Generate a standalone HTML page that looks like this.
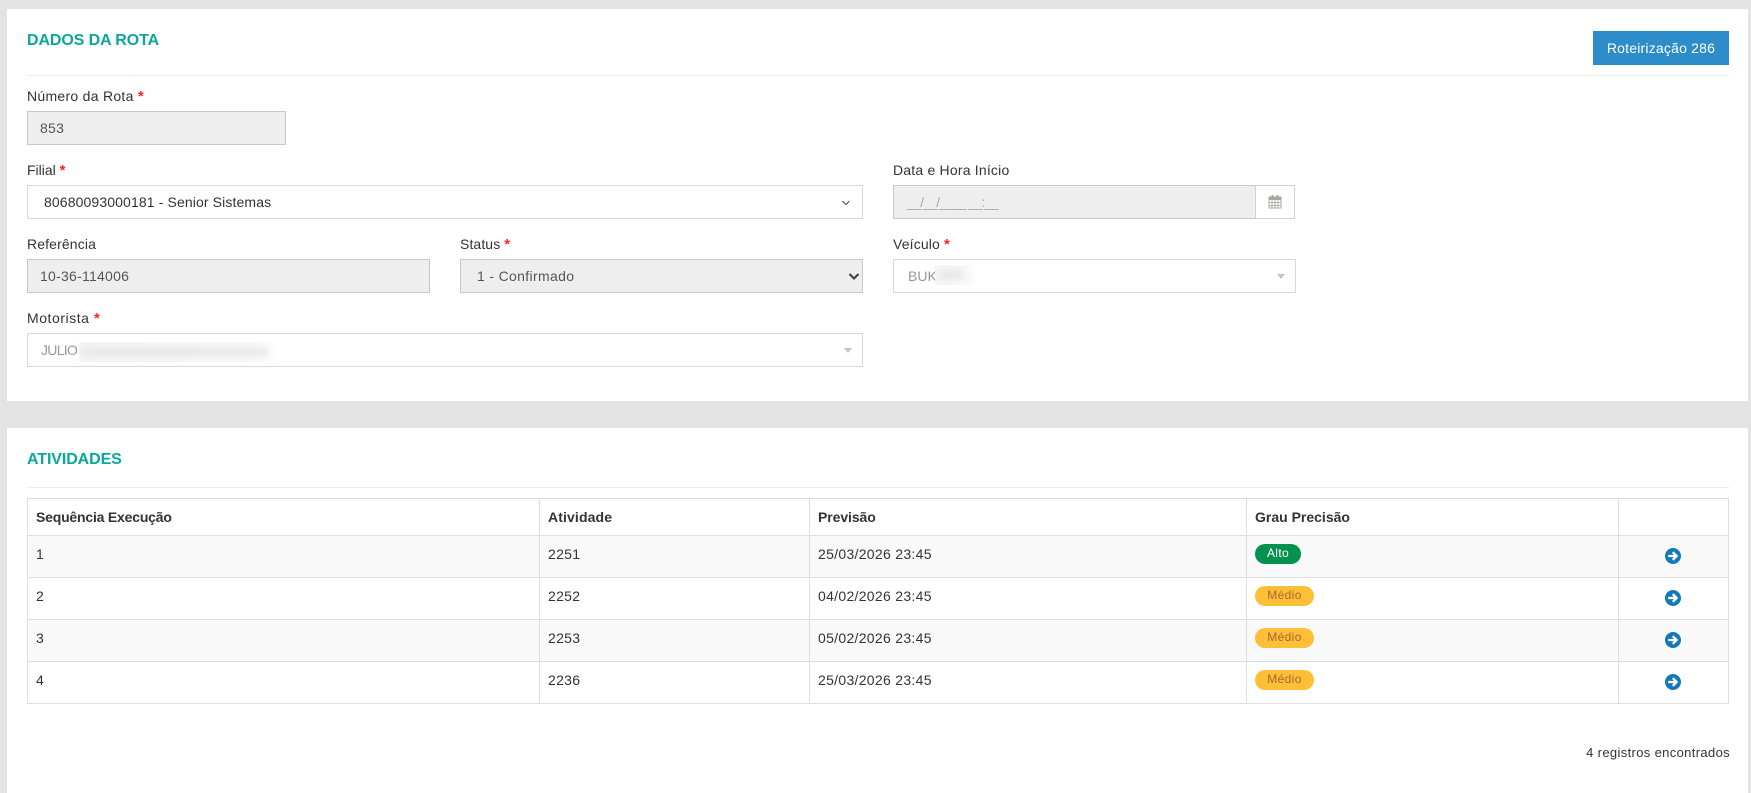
<!DOCTYPE html>
<html lang="pt-BR">
<head>
<meta charset="utf-8">
<title>Dados da Rota</title>
<style>
html,body{margin:0;padding:0;width:1751px;height:793px;overflow:hidden;background:#e3e3e3;}
body{position:relative;font-family:"Liberation Sans",sans-serif;font-size:14px;color:#333;}
.a{position:absolute;box-sizing:border-box;white-space:nowrap;}
.card{background:#fff;}
.t{font-size:16px;font-weight:bold;color:#0aa89a;letter-spacing:-.1px;line-height:20px;}
.hr{height:1px;background:#eee;}
.l{line-height:20px;color:#333;letter-spacing:.25px;}
.l b{color:#f22;font-weight:bold;font-size:15px;}
.i{height:34px;border:1px solid #d8d8d8;line-height:32px;letter-spacing:.25px;background:#fff;}
.d{background:#eee;border-color:#c8c8c8;color:#555;}
.th{font-weight:bold;line-height:20px;letter-spacing:0;color:#333;}
.c{line-height:20px;letter-spacing:.3px;color:#333;}
.h{background:#dedede;}
.v{background:#dedede;width:1px;top:498px;height:206px;}
.r{background:#f9f9f9;left:28px;width:1700px;height:41px;}
.b{height:20px;border-radius:10px;font-size:12px;line-height:19px;text-align:center;letter-spacing:.35px;}
.bw{overflow:hidden;height:20px;background:linear-gradient(90deg,#f6f6f6 0%,#f9f9f9 80%,#fff 100%);}
.bw i{display:block;position:absolute;left:4px;top:6px;height:8px;background:#e4e4e4;filter:blur(4px);}
</style>
</head>
<body>
<div class="a card" style="left:7px;top:9px;width:1741px;height:392px;"></div>
<div class="a card" style="left:7px;top:428px;width:1741px;height:365px;"></div>

<div class="a t" style="left:27px;top:31px;">DADOS DA ROTA</div>
<div class="a" style="left:1593px;top:31px;width:136px;height:34px;background:#2d8cca;color:#fff;text-align:center;line-height:34px;letter-spacing:.2px;">Roteirização 286</div>
<div class="a hr" style="left:27px;top:75px;width:1702px;"></div>

<div class="a l" style="left:27px;top:86px;letter-spacing:.28px;">Número da Rota <b>*</b></div>
<div class="a i d" style="left:27px;top:111px;width:259px;padding-left:12px;">853</div>

<div class="a l" style="left:27px;top:160px;letter-spacing:0;">Filial <b>*</b></div>
<div class="a i" style="left:27px;top:185px;width:836px;padding-left:16px;letter-spacing:.12px;">80680093000181 - Senior Sistemas</div>
<svg class="a" style="left:841px;top:198px" width="10" height="8" viewBox="0 0 10 8"><path d="M1.500 3l3.500 3.500L8.500 3" fill="none" stroke="#555" stroke-width="1.200"/></svg>

<div class="a l" style="left:893px;top:160px;letter-spacing:.2px;">Data e Hora Início</div>
<div class="a i d" style="left:893px;top:185px;width:363px;padding-left:13px;color:#aaa;border-right:1px solid #c8c8c8;letter-spacing:-1.16px;">__/__/____ __:__</div>
<div class="a i" style="left:1255px;top:185px;width:40px;border-color:#d0d0d0;border-left:1px solid #d0d0d0;"></div>
<svg class="a" style="left:1268px;top:195px" width="14" height="14" viewBox="0 0 14 14"><rect x="1" y="2" width="12" height="11" fill="#fff" stroke="#a8a8a0" stroke-width="1"/><rect x="1" y="2" width="12" height="3" fill="#a8a8a0"/><rect x="3.500" y="0" width="2" height="4" fill="#a8a8a0"/><rect x="8.500" y="0" width="2" height="4" fill="#a8a8a0"/><path d="M4 5v8M7 5v8M10 5v8M1 7.500h12M1 10.500h12" stroke="#b4b4ac" stroke-width="1"/></svg>

<div class="a l" style="left:27px;top:234px;letter-spacing:.13px;">Referência</div>
<div class="a i d" style="left:27px;top:259px;width:403px;padding-left:12px;">10-36-114006</div>

<div class="a l" style="left:460px;top:234px;letter-spacing:.1px;">Status <b>*</b></div>
<div class="a i d" style="left:460px;top:259px;width:403px;padding-left:16px;letter-spacing:.34px;">1 - Confirmado</div>
<svg class="a" style="left:848px;top:272px" width="12" height="9" viewBox="0 0 12 9"><path d="M1.500 2l4.500 4.500L10.500 2" fill="none" stroke="#444" stroke-width="2.200"/></svg>

<div class="a l" style="left:893px;top:234px;letter-spacing:.15px;">Veículo <b>*</b></div>
<div class="a i" style="left:893px;top:259px;width:403px;padding-left:14px;color:#999;letter-spacing:0;">BUK</div>
<div class="a bw" style="left:935px;top:265px;width:42px;"><i style="width:24px;"></i></div>
<svg class="a" style="left:1277px;top:274px" width="8" height="6" viewBox="0 0 8 6"><path d="M0 0h8L4 5z" fill="#c4c4c4"/></svg>

<div class="a l" style="left:27px;top:308px;letter-spacing:.55px;">Motorista <b>*</b></div>
<div class="a i" style="left:27px;top:333px;width:836px;padding-left:13px;color:#999;letter-spacing:-.7px;">JULIO</div>
<div class="a bw" style="left:79px;top:342px;width:201px;"><i style="width:185px;"></i></div>
<svg class="a" style="left:844px;top:348px" width="8" height="6" viewBox="0 0 8 6"><path d="M0 0h8L4 5z" fill="#c4c4c4"/></svg>

<div class="a t" style="left:27px;top:450px;">ATIVIDADES</div>
<div class="a hr" style="left:27px;top:487px;width:1702px;"></div>

<div class="a r" style="top:536px;"></div>
<div class="a r" style="top:620px;"></div>
<div class="a h" style="left:27px;top:498px;width:1702px;height:1px;"></div>
<div class="a h" style="left:27px;top:535px;width:1702px;height:1px;"></div>
<div class="a h" style="left:27px;top:577px;width:1702px;height:1px;"></div>
<div class="a h" style="left:27px;top:619px;width:1702px;height:1px;"></div>
<div class="a h" style="left:27px;top:661px;width:1702px;height:1px;"></div>
<div class="a h" style="left:27px;top:703px;width:1702px;height:1px;"></div>
<div class="a v" style="left:27px;"></div>
<div class="a v" style="left:539px;"></div>
<div class="a v" style="left:809px;"></div>
<div class="a v" style="left:1246px;"></div>
<div class="a v" style="left:1618px;"></div>
<div class="a v" style="left:1728px;"></div>

<div class="a th" style="left:36px;top:507px;letter-spacing:-.2px;">Sequência Execução</div>
<div class="a th" style="left:548px;top:507px;letter-spacing:.12px;">Atividade</div>
<div class="a th" style="left:818px;top:507px;letter-spacing:-.08px;">Previsão</div>
<div class="a th" style="left:1255px;top:507px;">Grau Precisão</div>

<div class="a c" style="left:36px;top:544px;">1</div>
<div class="a c" style="left:548px;top:544px;">2251</div>
<div class="a c" style="left:818px;top:544px;">25/03/2026 23:45</div>
<div class="a b" style="left:1255px;top:544px;width:46px;background:#05924f;color:#fff;">Alto</div>

<div class="a c" style="left:36px;top:586px;">2</div>
<div class="a c" style="left:548px;top:586px;">2252</div>
<div class="a c" style="left:818px;top:586px;">04/02/2026 23:45</div>
<div class="a b" style="left:1255px;top:586px;width:59px;background:#fdbf38;color:#a8682a;">Médio</div>

<div class="a c" style="left:36px;top:628px;">3</div>
<div class="a c" style="left:548px;top:628px;">2253</div>
<div class="a c" style="left:818px;top:628px;">05/02/2026 23:45</div>
<div class="a b" style="left:1255px;top:628px;width:59px;background:#fdbf38;color:#a8682a;">Médio</div>

<div class="a c" style="left:36px;top:670px;">4</div>
<div class="a c" style="left:548px;top:670px;">2236</div>
<div class="a c" style="left:818px;top:670px;">25/03/2026 23:45</div>
<div class="a b" style="left:1255px;top:670px;width:59px;background:#fdbf38;color:#a8682a;">Médio</div>

<svg class="a" style="left:1665px;top:547.500px" width="16" height="16" viewBox="0 0 16 16"><circle cx="8" cy="8" r="8" fill="#1579b8"/><path d="M3.200 8h8M7.800 4.200L11.600 8l-3.800 3.800" fill="none" stroke="#fff" stroke-width="2.300"/></svg>
<svg class="a" style="left:1665px;top:589.500px" width="16" height="16" viewBox="0 0 16 16"><circle cx="8" cy="8" r="8" fill="#1579b8"/><path d="M3.200 8h8M7.800 4.200L11.600 8l-3.800 3.800" fill="none" stroke="#fff" stroke-width="2.300"/></svg>
<svg class="a" style="left:1665px;top:631.500px" width="16" height="16" viewBox="0 0 16 16"><circle cx="8" cy="8" r="8" fill="#1579b8"/><path d="M3.200 8h8M7.800 4.200L11.600 8l-3.800 3.800" fill="none" stroke="#fff" stroke-width="2.300"/></svg>
<svg class="a" style="left:1665px;top:673.500px" width="16" height="16" viewBox="0 0 16 16"><circle cx="8" cy="8" r="8" fill="#1579b8"/><path d="M3.200 8h8M7.800 4.200L11.600 8l-3.800 3.800" fill="none" stroke="#fff" stroke-width="2.300"/></svg>

<div class="a" style="right:21px;top:743px;font-size:13px;line-height:20px;letter-spacing:.35px;color:#333;">4 registros encontrados</div>
</body>
</html>
